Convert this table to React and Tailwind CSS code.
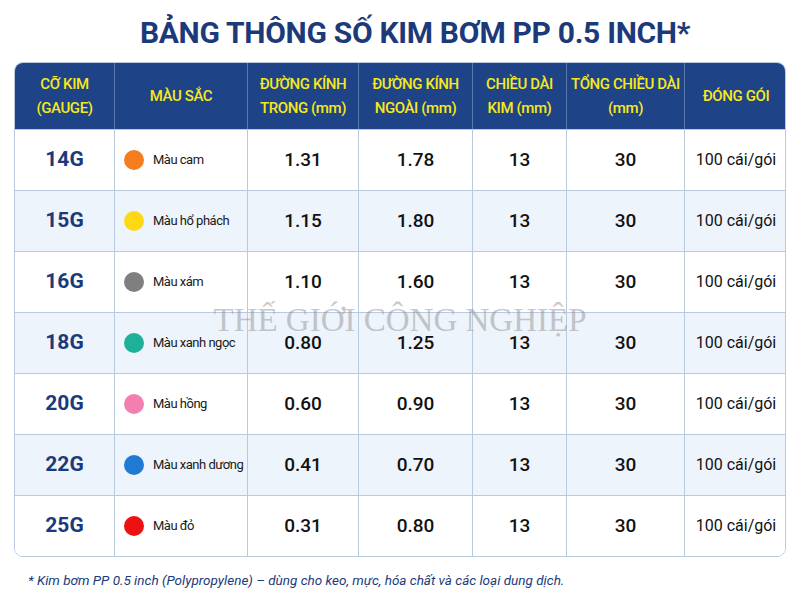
const rows = [
  { gauge: '14G', dot: 'bg-[#f57c1f]', color: 'Màu cam', inner: '1.31', outer: '1.78' },
  { gauge: '15G', dot: 'bg-[#fcd912]', color: 'Màu hổ phách', inner: '1.15', outer: '1.80' },
  { gauge: '16G', dot: 'bg-[#7f7f7f]', color: 'Màu xám', inner: '1.10', outer: '1.60' },
  { gauge: '18G', dot: 'bg-[#1fb09a]', color: 'Màu xanh ngọc', inner: '0.80', outer: '1.25' },
  { gauge: '20G', dot: 'bg-[#f27fb0]', color: 'Màu hồng', inner: '0.60', outer: '0.90' },
  { gauge: '22G', dot: 'bg-[#1f7bd1]', color: 'Màu xanh dương', inner: '0.41', outer: '0.70' },
  { gauge: '25G', dot: 'bg-[#ee1111]', color: 'Màu đỏ', inner: '0.31', outer: '0.80' },
];

const headers = [
  ['CỠ KIM', '(GAUGE)'],
  ['MÀU SẮC'],
  ['ĐƯỜNG KÍNH', 'TRONG (mm)'],
  ['ĐƯỜNG KÍNH', 'NGOÀI (mm)'],
  ['CHIỀU DÀI', 'KIM (mm)'],
  ['TỔNG CHIỀU DÀI', '(mm)'],
  ['ĐÓNG GÓI'],
];

const cols = 'grid grid-cols-[99px_133px_111px_114px_94px_118px_103px]';

export default function App() {
  return (
    <div
      className="w-[800px] h-[600px] bg-white flex flex-col items-center relative overflow-hidden"
      style={{ fontFamily: 'Roboto, "Liberation Sans", sans-serif' }}
    >
      <h1 className="mt-[14px] ml-[30px] h-[42px] text-[30px] font-bold text-[#1c3a7a] tracking-[-0.3px] leading-[38px]">
        BẢNG THÔNG SỐ KIM BƠM PP 0.5 INCH*
      </h1>

      <div className="mt-[6px] w-[772px] rounded-[9px] overflow-hidden border border-[#b9c9de]">
        {/* Header */}
        <div className={`${cols} h-[66px] bg-[#1e4386]`}>
          {headers.map((h, i) => (
            <div
              key={i}
              className={`flex flex-col items-center justify-center text-[#f7e81c] text-[15px] font-medium leading-[24px] tracking-[-0.4px] whitespace-nowrap ${
                i > 0 ? 'border-l border-[#5b78ad]' : ''
              }`}
            >
              {h.map((line) => (
                <span key={line}>{line}</span>
              ))}
            </div>
          ))}
        </div>

        {/* Body */}
        {rows.map((r, idx) => (
          <div
            key={r.gauge}
            className={`${cols} h-[61px] border-t border-[#b9c9de] ${
              idx % 2 === 1 ? 'bg-[#eef4fb]' : 'bg-white'
            }`}
          >
            <div className="flex items-center justify-center text-[21px] font-bold text-[#1c3a7a]">
              {r.gauge}
            </div>
            <div className="flex items-center gap-[9px] pl-[9px] border-l border-[#b9c9de] whitespace-nowrap">
              <span className={`w-[20px] h-[20px] shrink-0 rounded-full ${r.dot}`} />
              <span className="text-[13px] text-[#1a1a1a] tracking-[-0.5px]">{r.color}</span>
            </div>
            <div className="flex items-center justify-center text-[19px] font-medium text-[#111] border-l border-[#b9c9de]">
              {r.inner}
            </div>
            <div className="flex items-center justify-center text-[19px] font-medium text-[#111] border-l border-[#b9c9de]">
              {r.outer}
            </div>
            <div className="flex items-center justify-center text-[19px] font-medium text-[#111] border-l border-[#b9c9de]">
              13
            </div>
            <div className="flex items-center justify-center text-[19px] font-medium text-[#111] border-l border-[#b9c9de]">
              30
            </div>
            <div className="flex items-center justify-center text-[16px] text-[#111] border-l border-[#b9c9de] whitespace-nowrap">
              100 cái/gói
            </div>
          </div>
        ))}
      </div>

      <p className="self-start ml-[28px] mt-[13px] text-[13.5px] italic text-[#1c3a7a]">
        * Kim bơm PP 0.5 inch (Polypropylene) – dùng cho keo, mực, hóa chất và các loại dung dịch.
      </p>

      {/* Watermark */}
      <div
        className="absolute left-0 right-0 top-[296px] text-center text-[33px] text-[#8a8a8a] opacity-45 pointer-events-none"
        style={{ fontFamily: '"Liberation Serif", serif' }}
      >
        THẾ GIỚI CÔNG NGHIỆP
      </div>
    </div>
  );
}
